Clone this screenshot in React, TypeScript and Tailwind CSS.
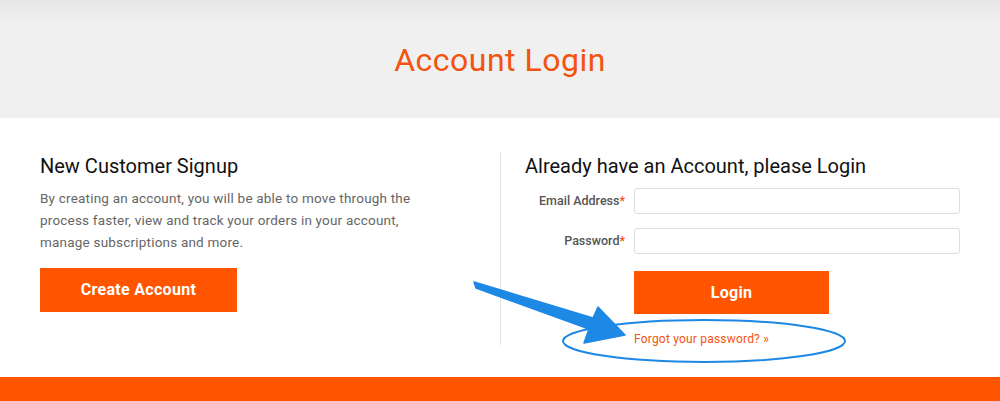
import React from 'react';

const font = { fontFamily: 'Roboto, "Liberation Sans", sans-serif' };

function Annotation() {
  // blue call-out drawn on top of the form
  return (
    <svg
      className="pointer-events-none absolute left-0 top-0"
      width={1000}
      height={401}
      viewBox="0 0 1000 401"
    >
      <ellipse cx={704} cy={341} rx={141} ry={21} fill="none" stroke="#1e88e5" strokeWidth={2} />
      <path
        d="M474 282 L476 288 L589 329 L584 343 L625 335 L598 307 L593 318 Z"
        fill="#1e88e5"
        stroke="#1e88e5"
        strokeWidth={1.5}
        strokeLinejoin="round"
      />
    </svg>
  );
}

export default function App() {
  return (
    <div className="relative w-[1000px] h-[401px] overflow-hidden bg-white" style={font}>
      <header className="h-[118px] flex items-center justify-center bg-gradient-to-b from-[#e6e6e6] via-[#f0f0f0] via-20% to-[#f0f0f0]">
        <h1 className="text-[32px] leading-none text-[#f2540f] tracking-[0.5px] pt-[2px]">Account Login</h1>
      </header>

      <main className="h-[259px] flex pt-[34px]">
        <section className="w-[501px] pl-[40px] pr-6">
          <h2 className="text-[20px] leading-6 text-[#111] mt-[2px]">New Customer Signup</h2>
          <p className="mt-[9px] text-[13.5px] leading-[22px] text-[#666] tracking-[0.2px] w-[400px]">
            By creating an account, you will be able to move through the process faster, view and track your orders in your account, manage subscriptions and more.
          </p>
          <button className="mt-[15px] w-[197px] h-[44px] bg-[#ff5500] text-white text-[16px] font-bold tracking-[0.3px]">
            Create Account
          </button>
        </section>

        <section className="flex-1 h-[193px] border-l border-[#e6e6e6] pl-[24px] pr-[40px]">
          <h2 className="text-[20px] leading-6 text-[#111] mt-[2px]">Already have an Account, please Login</h2>
          <div className="mt-[10px] flex flex-col gap-[14px]">
            <div className="flex items-center gap-[9px]">
              <label className="w-[100px] text-right text-[12.5px] font-medium text-[#555]">
                Email Address<span className="text-[#f2540f]">*</span>
              </label>
              <input className="w-[326px] h-[26px] border border-[#ddd] rounded-[3px] bg-white" />
            </div>
            <div className="flex items-center gap-[9px]">
              <label className="w-[100px] text-right text-[12.5px] font-medium text-[#555]">
                Password<span className="text-[#f2540f]">*</span>
              </label>
              <input type="password" className="w-[326px] h-[26px] border border-[#ddd] rounded-[3px] bg-white" />
            </div>
          </div>
          <div className="ml-[109px] mt-[17px]">
            <button className="w-[195px] h-[43px] bg-[#ff5500] text-white text-[16px] font-bold tracking-[0.3px]">
              Login
            </button>
            <a className="block mt-[16px] text-[12px] text-[#f2540f] tracking-[0.2px]">Forgot your password? »</a>
          </div>
        </section>
      </main>

      <footer className="h-[24px] bg-[#ff5500]" />

      <Annotation />
    </div>
  );
}
